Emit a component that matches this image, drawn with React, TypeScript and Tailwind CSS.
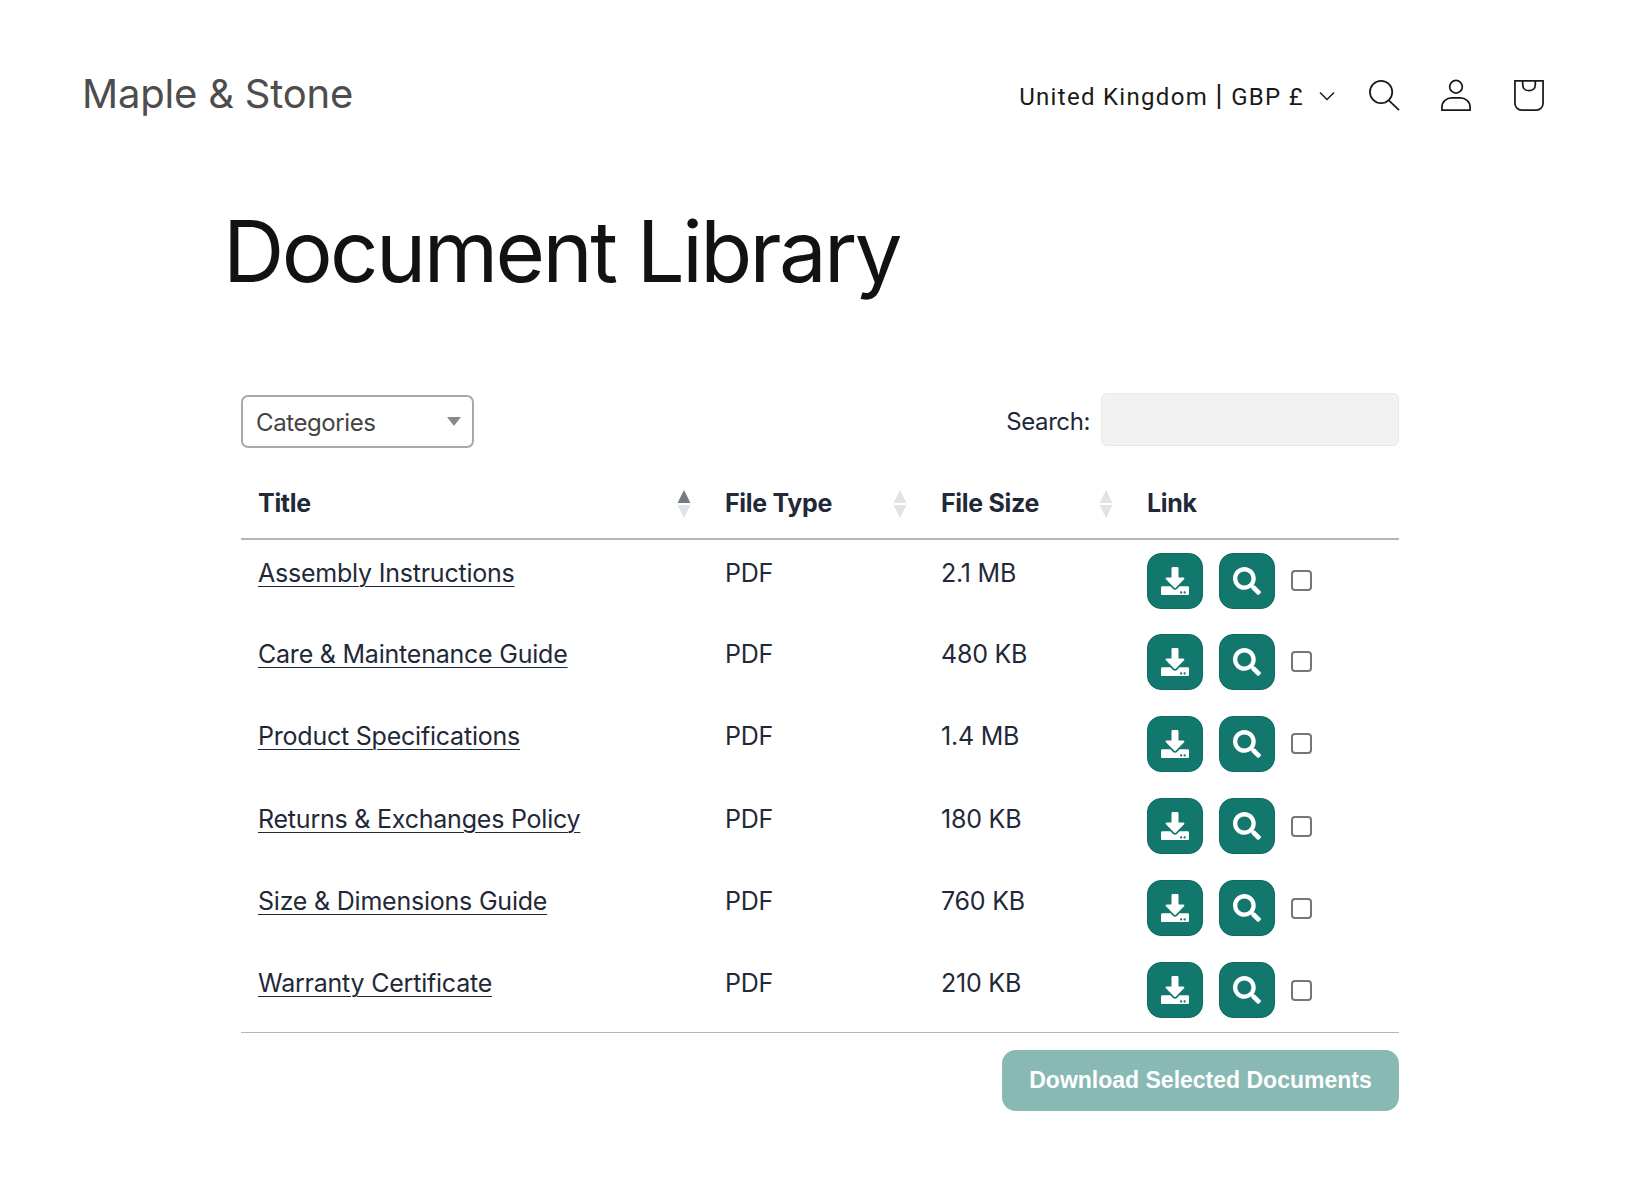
import { FaDownload, FaSearch } from 'react-icons/fa'

const documents = [
  { title: 'Assembly Instructions', size: '2.1 MB' },
  { title: 'Care & Maintenance Guide', size: '480 KB' },
  { title: 'Product Specifications', size: '1.4 MB' },
  { title: 'Returns & Exchanges Policy', size: '180 KB' },
  { title: 'Size & Dimensions Guide', size: '760 KB' },
  { title: 'Warranty Certificate', size: '210 KB' },
]

function SortArrows({ active = false }: { active?: boolean }) {
  return (
    <svg className="w-[14px] h-[30px]" viewBox="0 0 14 30">
      <path d="M7 1 L13.5 14 H0.5 Z" fill={active ? '#757b84' : '#e1e3e6'} />
      <path d="M7 29 L13.5 16 H0.5 Z" fill="#e1e3e6" />
    </svg>
  )
}

function HeaderCell({ label, sorted, sortable = true }: { label: string; sorted?: boolean; sortable?: boolean }) {
  return (
    <th className="px-[17px] pb-[15px] pt-0 text-left font-bold tracking-[-0.3px]">
      <div className="flex items-center justify-between">
        <span>{label}</span>
        {sortable && <SortArrows active={sorted} />}
      </div>
    </th>
  )
}

export default function App() {
  return (
    <div className="min-h-[1189px] bg-white font-['Inter',sans-serif] text-[#1f2937]">
      {/* Top bar */}
      <header className="flex items-center justify-between pl-[82px] pr-[95px] pt-[68px]">
        <span className="mb-[2px] text-[40px] leading-[52px] tracking-[-0.2px] text-[#4d4d4d]">Maple &amp; Stone</span>
        <div className="flex items-center">
          <span className="mt-[4px] font-['Roboto',sans-serif] text-[24px] tracking-[1.3px] text-[#1a1a1a]">
            United Kingdom <span className="text-[30px] leading-none">|</span> GBP £
          </span>
          <svg className="mt-[2px] ml-[15px] w-[16px] h-[10px]" viewBox="0 0 16 10" fill="none" stroke="#1a1a1a" strokeWidth="1.5">
            <path d="M1 1.5 L8 8.5 L15 1.5" />
          </svg>
          <svg className="ml-[33px] w-[32px] h-[32px]" viewBox="0 0 33 33" fill="none" stroke="#1a1a1a" strokeWidth="1.8">
            <circle cx="13.5" cy="13.5" r="11.5" />
            <path d="M21.5 22 L32 32" />
          </svg>
          <svg className="ml-[40px] w-[32px] h-[32px]" viewBox="0 0 33 33" fill="none" stroke="#1a1a1a" strokeWidth="1.8">
            <circle cx="16.5" cy="8" r="6.5" />
            <path d="M2 32 V29 C2 23 7 19.5 12 19.5 H21 C26 19.5 31 23 31 29 V32 Z" />
          </svg>
          <svg className="ml-[41px] w-[32px] h-[32px]" viewBox="0 0 33 33" fill="none" stroke="#1a1a1a" strokeWidth="1.8">
            <path d="M2 2 H31 V25 C31 29 28 32 24 32 H9 C5 32 2 29 2 25 Z" />
            <path d="M10 2 V6 C10 10 13 12 16.5 12 C20 12 23 10 23 6 V2" />
          </svg>
        </div>
      </header>

      <main className="pl-[223px] pr-[241px]">
        <h1 className="mt-[80px] text-[85px] leading-[100px] tracking-[-2.6px] font-normal text-[#121212]">Document Library</h1>

        <div className="ml-[18px] mt-[91px]">
          {/* Filters */}
          <div className="flex items-start justify-between">
            <div className="mt-[2px] flex items-center justify-between w-[233px] h-[53px] border-2 border-[#a9a9a9] rounded-[7px] pl-[13px] pr-[11px] text-[24px] tracking-[-0.4px] text-[#444]">
              <span className="mt-[3px]">Categories</span>
              <svg className="w-[14px] h-[9px]" viewBox="0 0 14 9">
                <path d="M0 0 H14 L7 9 Z" fill="#8a8a8a" />
              </svg>
            </div>
            <label className="flex items-center text-[24px] tracking-[-0.4px]">
              <span className="mt-[4px]">Search:</span>
              <input className="ml-[11px] w-[298px] h-[53px] bg-[#f2f2f2] border border-[#e8e8e8] rounded-[6px]" type="text" />
            </label>
          </div>

          {/* Documents */}
          <table className="mt-[37px] w-full table-fixed border-collapse text-[25px] tracking-[-0.22px]">
            <colgroup>
              <col className="w-[467px]" />
              <col className="w-[216px]" />
              <col className="w-[206px]" />
              <col />
            </colgroup>
            <thead>
              <tr className="border-b-2 border-[#b5b5b5]">
                <HeaderCell label="Title" sorted />
                <HeaderCell label="File Type" />
                <HeaderCell label="File Size" />
                <HeaderCell label="Link" sortable={false} />
              </tr>
            </thead>
            <tbody>
              {documents.map((doc) => (
                <tr key={doc.title} className="h-[82.2px] align-top">
                  <td className="px-[17px] pt-[15.5px]">
                    <a className="underline underline-offset-[4px] decoration-[1.25px]" href="#">{doc.title}</a>
                  </td>
                  <td className="px-[17px] pt-[15.5px]">PDF</td>
                  <td className="px-[17px] pt-[15.5px]">{doc.size}</td>
                  <td className="px-[17px] pt-[13px]">
                    <div className="flex items-center">
                      <button className="flex items-center justify-center w-[56px] h-[56px] rounded-[14px] border border-[#0e6a60] bg-[#12776d] text-white text-[28px]">
                        <FaDownload />
                      </button>
                      <button className="flex items-center justify-center ml-[16px] w-[56px] h-[56px] rounded-[14px] border border-[#0e6a60] bg-[#12776d] text-white text-[28px]">
                        <FaSearch />
                      </button>
                      <input className="ml-[16px] w-[21px] h-[21px] appearance-none border-2 border-[#767676] rounded-[4px] bg-white" type="checkbox" />
                    </div>
                  </td>
                </tr>
              ))}
            </tbody>
          </table>

          <div className="border-t border-[#b5b5b5] flex justify-end pt-[17px]">
            <button className="w-[397px] h-[61px] rounded-[14px] bg-[#88b9b4] text-white font-['Liberation_Sans',sans-serif] font-bold text-[23px]">
              Download Selected Documents
            </button>
          </div>
        </div>
      </main>
    </div>
  )
}
